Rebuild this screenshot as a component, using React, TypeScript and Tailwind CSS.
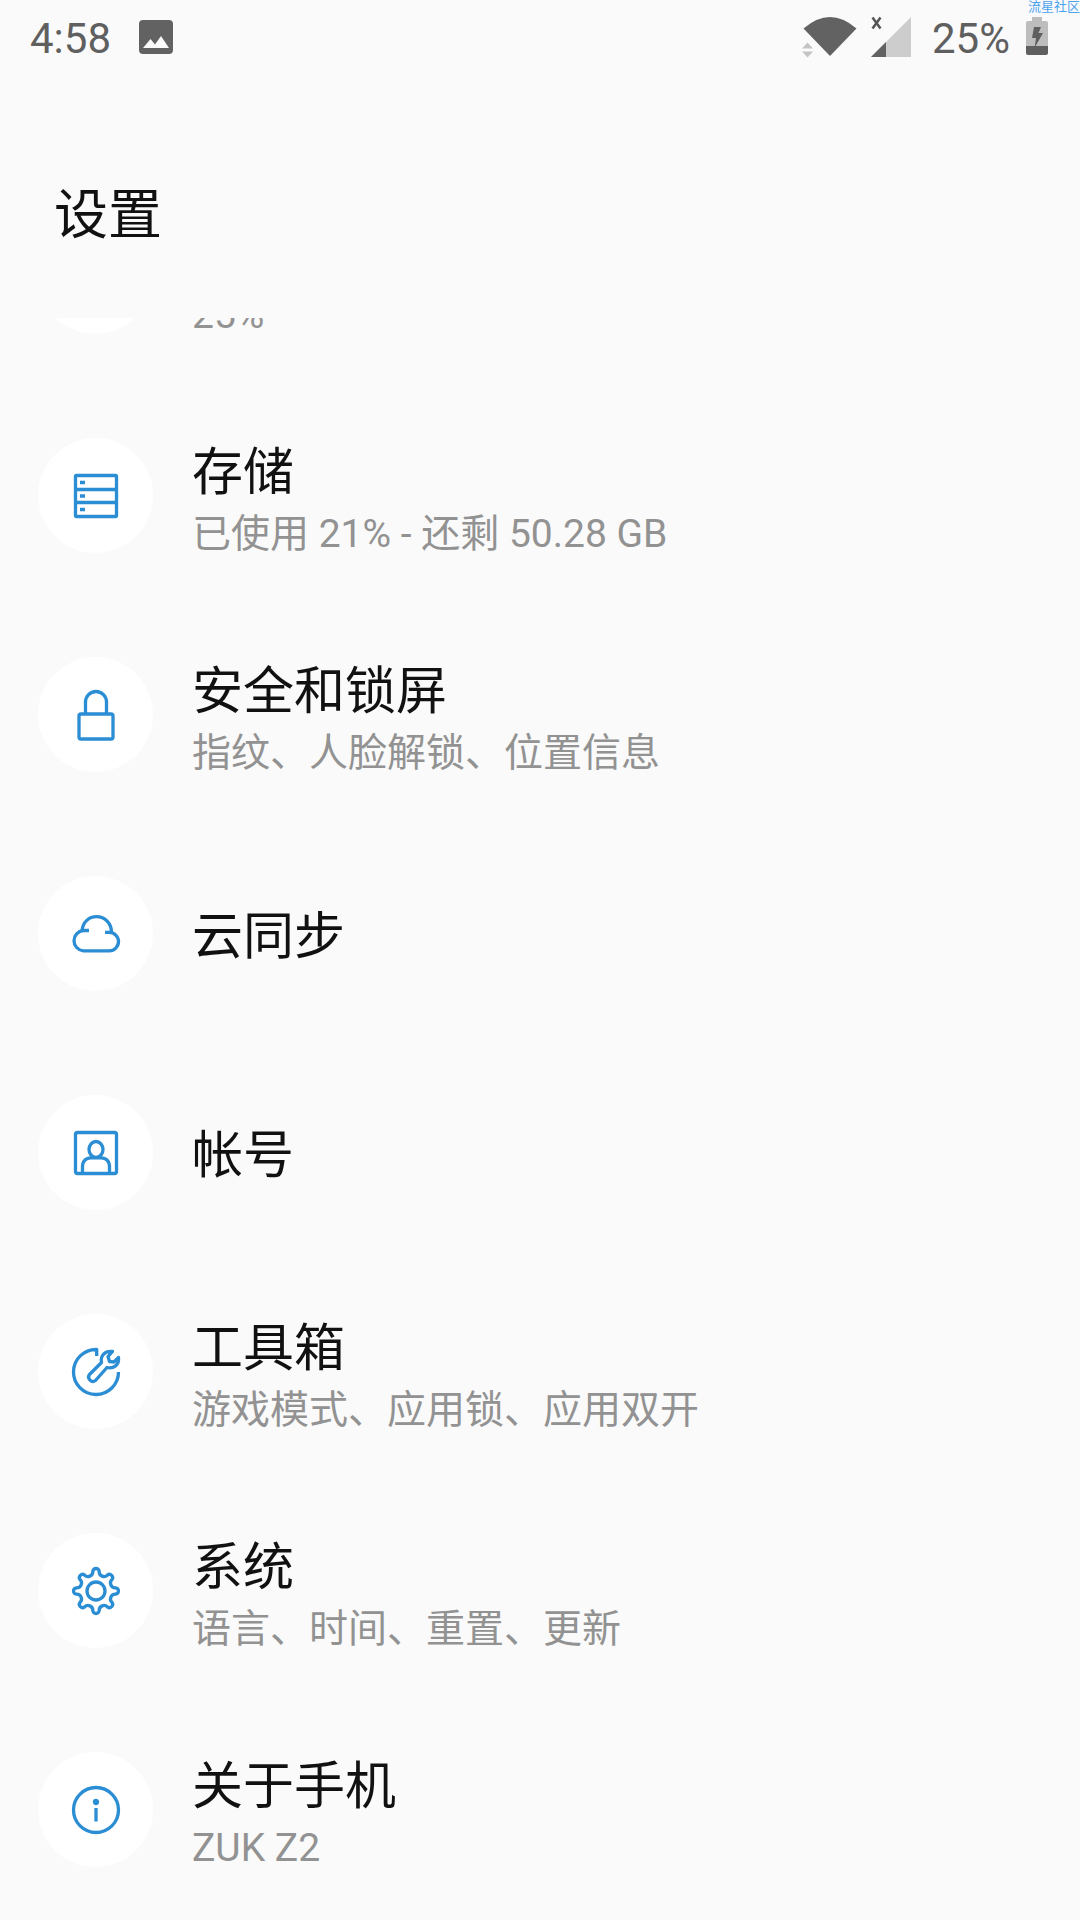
import type { ReactNode } from "react";

type Item = {
  title?: string;
  summary?: string;
  icon?: ReactNode;
};

const items: Item[] = [
  { summary: "25%" },
  {
    title: "存储",
    summary: "已使用 21% - 还剩 50.28 GB",
    icon: (
      <>
        <rect x="-20.5" y="-20.5" width="41" height="41" rx="1" />
        <path d="M-20 -6.5H20M-20 6.5H20" />
        <path d="M-16 -13.5H-11M-16 0H-11M-16 13.5H-11" />
      </>
    ),
  },
  {
    title: "安全和锁屏",
    summary: "指纹、人脸解锁、位置信息",
    icon: (
      <>
        <rect x="-17" y="-1" width="34" height="25" rx="2" />
        <path d="M-10.5 -1V-13A10.5 10.5 0 0 1 10.5 -13V-1" />
      </>
    ),
  },
  {
    title: "云同步",
    icon: (
      <>
        <path d="M-14 -3.5C-13 -12 -7 -17.3 0.5 -17.3C9 -17.3 15.5 -10.5 15.5 -1.5" />
        <path d="M-7 -3.5H-12.8A10.2 10.2 0 0 0 -12.8 16.8H13.3A9.2 9.2 0 0 0 13.3 -1.6H9" />
      </>
    ),
  },
  {
    title: "帐号",
    icon: (
      <>
        <rect x="-20.5" y="-20.5" width="41" height="41" rx="2" />
        <ellipse cx="0" cy="-3.5" rx="7" ry="8" />
        <path d="M-13.5 20V14C-13.5 8 -10 4.8 -5 4.8H5C10 4.8 13.5 8 13.5 14V20" />
      </>
    ),
  },
  {
    title: "工具箱",
    summary: "游戏模式、应用锁、应用双开",
    icon: (
      <>
        <path d="M0.7 -16V-22.5A22.5 22.5 0 1 0 22.5 0" />
        <path d="M-6.5 2.5L5.500 -9.500C4 -16 9 -21.500 16.500 -20.500L12 -15.500L13.500 -10.500L18 -10L22.500 -14.500C23.500 -7 17.500 -3 11 -4.500L-0.500 8.500A4.300 4.300 0 0 1 -6.500 2.500Z" />
      </>
    ),
  },
  {
    title: "系统",
    summary: "语言、时间、重置、更新",
    icon: (
      <>
        <path d="M-3.2 -19.3A3.2 3.2 0 0 1 3.2 -19.3A4.8 4.8 0 0 0 11.4 -15.9A3.2 3.2 0 0 1 15.9 -11.4A4.8 4.8 0 0 0 19.3 -3.2A3.2 3.2 0 0 1 19.3 3.2A4.8 4.8 0 0 0 15.9 11.4A3.2 3.2 0 0 1 11.4 15.9A4.8 4.8 0 0 0 3.2 19.3A3.2 3.2 0 0 1 -3.2 19.3A4.8 4.8 0 0 0 -11.4 15.9A3.2 3.2 0 0 1 -15.9 11.4A4.8 4.8 0 0 0 -19.3 3.2A3.2 3.2 0 0 1 -19.3 -3.2A4.8 4.8 0 0 0 -15.9 -11.4A3.2 3.2 0 0 1 -11.4 -15.9A4.8 4.8 0 0 0 -3.2 -19.3Z" />
        <circle r="9" />
      </>
    ),
  },
  {
    title: "关于手机",
    summary: "ZUK Z2",
    icon: (
      <>
        <circle r="22.5" />
        <path d="M0 -2V11.5" />
        <circle cy="-8" r="1.5" />
      </>
    ),
  },
];

function StatusBar() {
  return (
    <div className="flex h-[74px] items-center justify-between pl-[30px] pr-8 text-[42px] leading-[60px] text-[#5f5f5f]">
      <div className="flex items-center gap-7">
        <span className="pt-1">4:58</span>
        <svg width="34" height="34" viewBox="0 0 34 34">
          <rect width="34" height="34" rx="4" fill="#626262" />
          <path d="M4 28L11.5 19L16 24.5L22 16L30 28Z" fill="#fafafa" />
        </svg>
      </div>

      <div className="flex items-center">
        {/* Wi-Fi with the data activity arrows */}
        <svg width="55" height="42" viewBox="0 0 55 42" className="mr-[14px]">
          <path d="M1.5 12.5Q28 -10.5 54.5 12.5L28 40Z" fill="#626262" />
          <path d="M0 32.5L5.5 26.5L11 32.5ZM0 35.5H11L5.5 41.5Z" fill="#c4c4c4" />
        </svg>
        {/* Mobile signal, no data */}
        <svg width="41" height="42" viewBox="0 0 41 42" className="mr-5">
          <path d="M0 41L40 1V41Z" fill="#cdcdcd" />
          <path d="M0 41L15 26V41Z" fill="#626262" />
          <path d="M1.5 1.5L9.5 12.5M9.5 1.5L1.5 12.5" stroke="#555" strokeWidth="2.5" />
        </svg>
        <span className="mr-4 pt-1">25%</span>
        <svg width="22" height="40" viewBox="0 0 22 40">
          <path d="M6 0H16V4H20Q22 4 22 6V29H0V6Q0 4 2 4H6Z" fill="#bdbdbd" />
          <path d="M0 29H22V36Q22 38 20 38H2Q0 38 0 36Z" fill="#5f5f5f" />
          <path d="M8 10H15L12.5 16H17L8.5 31L10 21H6Z" fill="#5f5f5f" />
        </svg>
      </div>
    </div>
  );
}

function SettingsRow({ title, summary, icon }: Item) {
  return (
    <li>
      <a href="#" className="flex h-[219px] items-center gap-[39px] px-[38px]">
        <span className="flex size-[115px] shrink-0 items-center justify-center rounded-full bg-white">
          <svg
            width="56"
            height="56"
            viewBox="-28 -28 56 56"
            fill="none"
            stroke="#2b8dd3"
            strokeWidth="3.3"
            strokeLinejoin="round"
          >
            {icon}
          </svg>
        </span>
        <span className="flex min-w-0 flex-col pt-[6px]">
          <span className="min-h-[70px] text-[51px] leading-[70px] text-[#111]">{title}</span>
          {summary && (
            <span className="text-[39px] leading-[52px] text-[#929292]">{summary}</span>
          )}
        </span>
      </a>
    </li>
  );
}

export default function App() {
  return (
    <div className="relative flex h-screen flex-col overflow-hidden bg-[#fafafa] font-[Roboto,'Noto_Sans_CJK_SC',sans-serif]">
      <span className="absolute right-0 top-0 text-[13px] leading-[13px] text-[#4ba3f0]">
        流星社区
      </span>

      <StatusBar />

      <header className="px-[54px] pb-[62px] pt-[102px]">
        <h1 className="text-[54px] leading-[80px] text-[#111]">设置</h1>
      </header>

      {/* Scrolled to the end, so the first row is cut by the header */}
      <main className="flex min-h-0 flex-1 flex-col justify-end overflow-hidden">
        <ul className="pb-px">
          {items.map((item, i) => (
            <SettingsRow key={i} {...item} />
          ))}
        </ul>
      </main>
    </div>
  );
}
